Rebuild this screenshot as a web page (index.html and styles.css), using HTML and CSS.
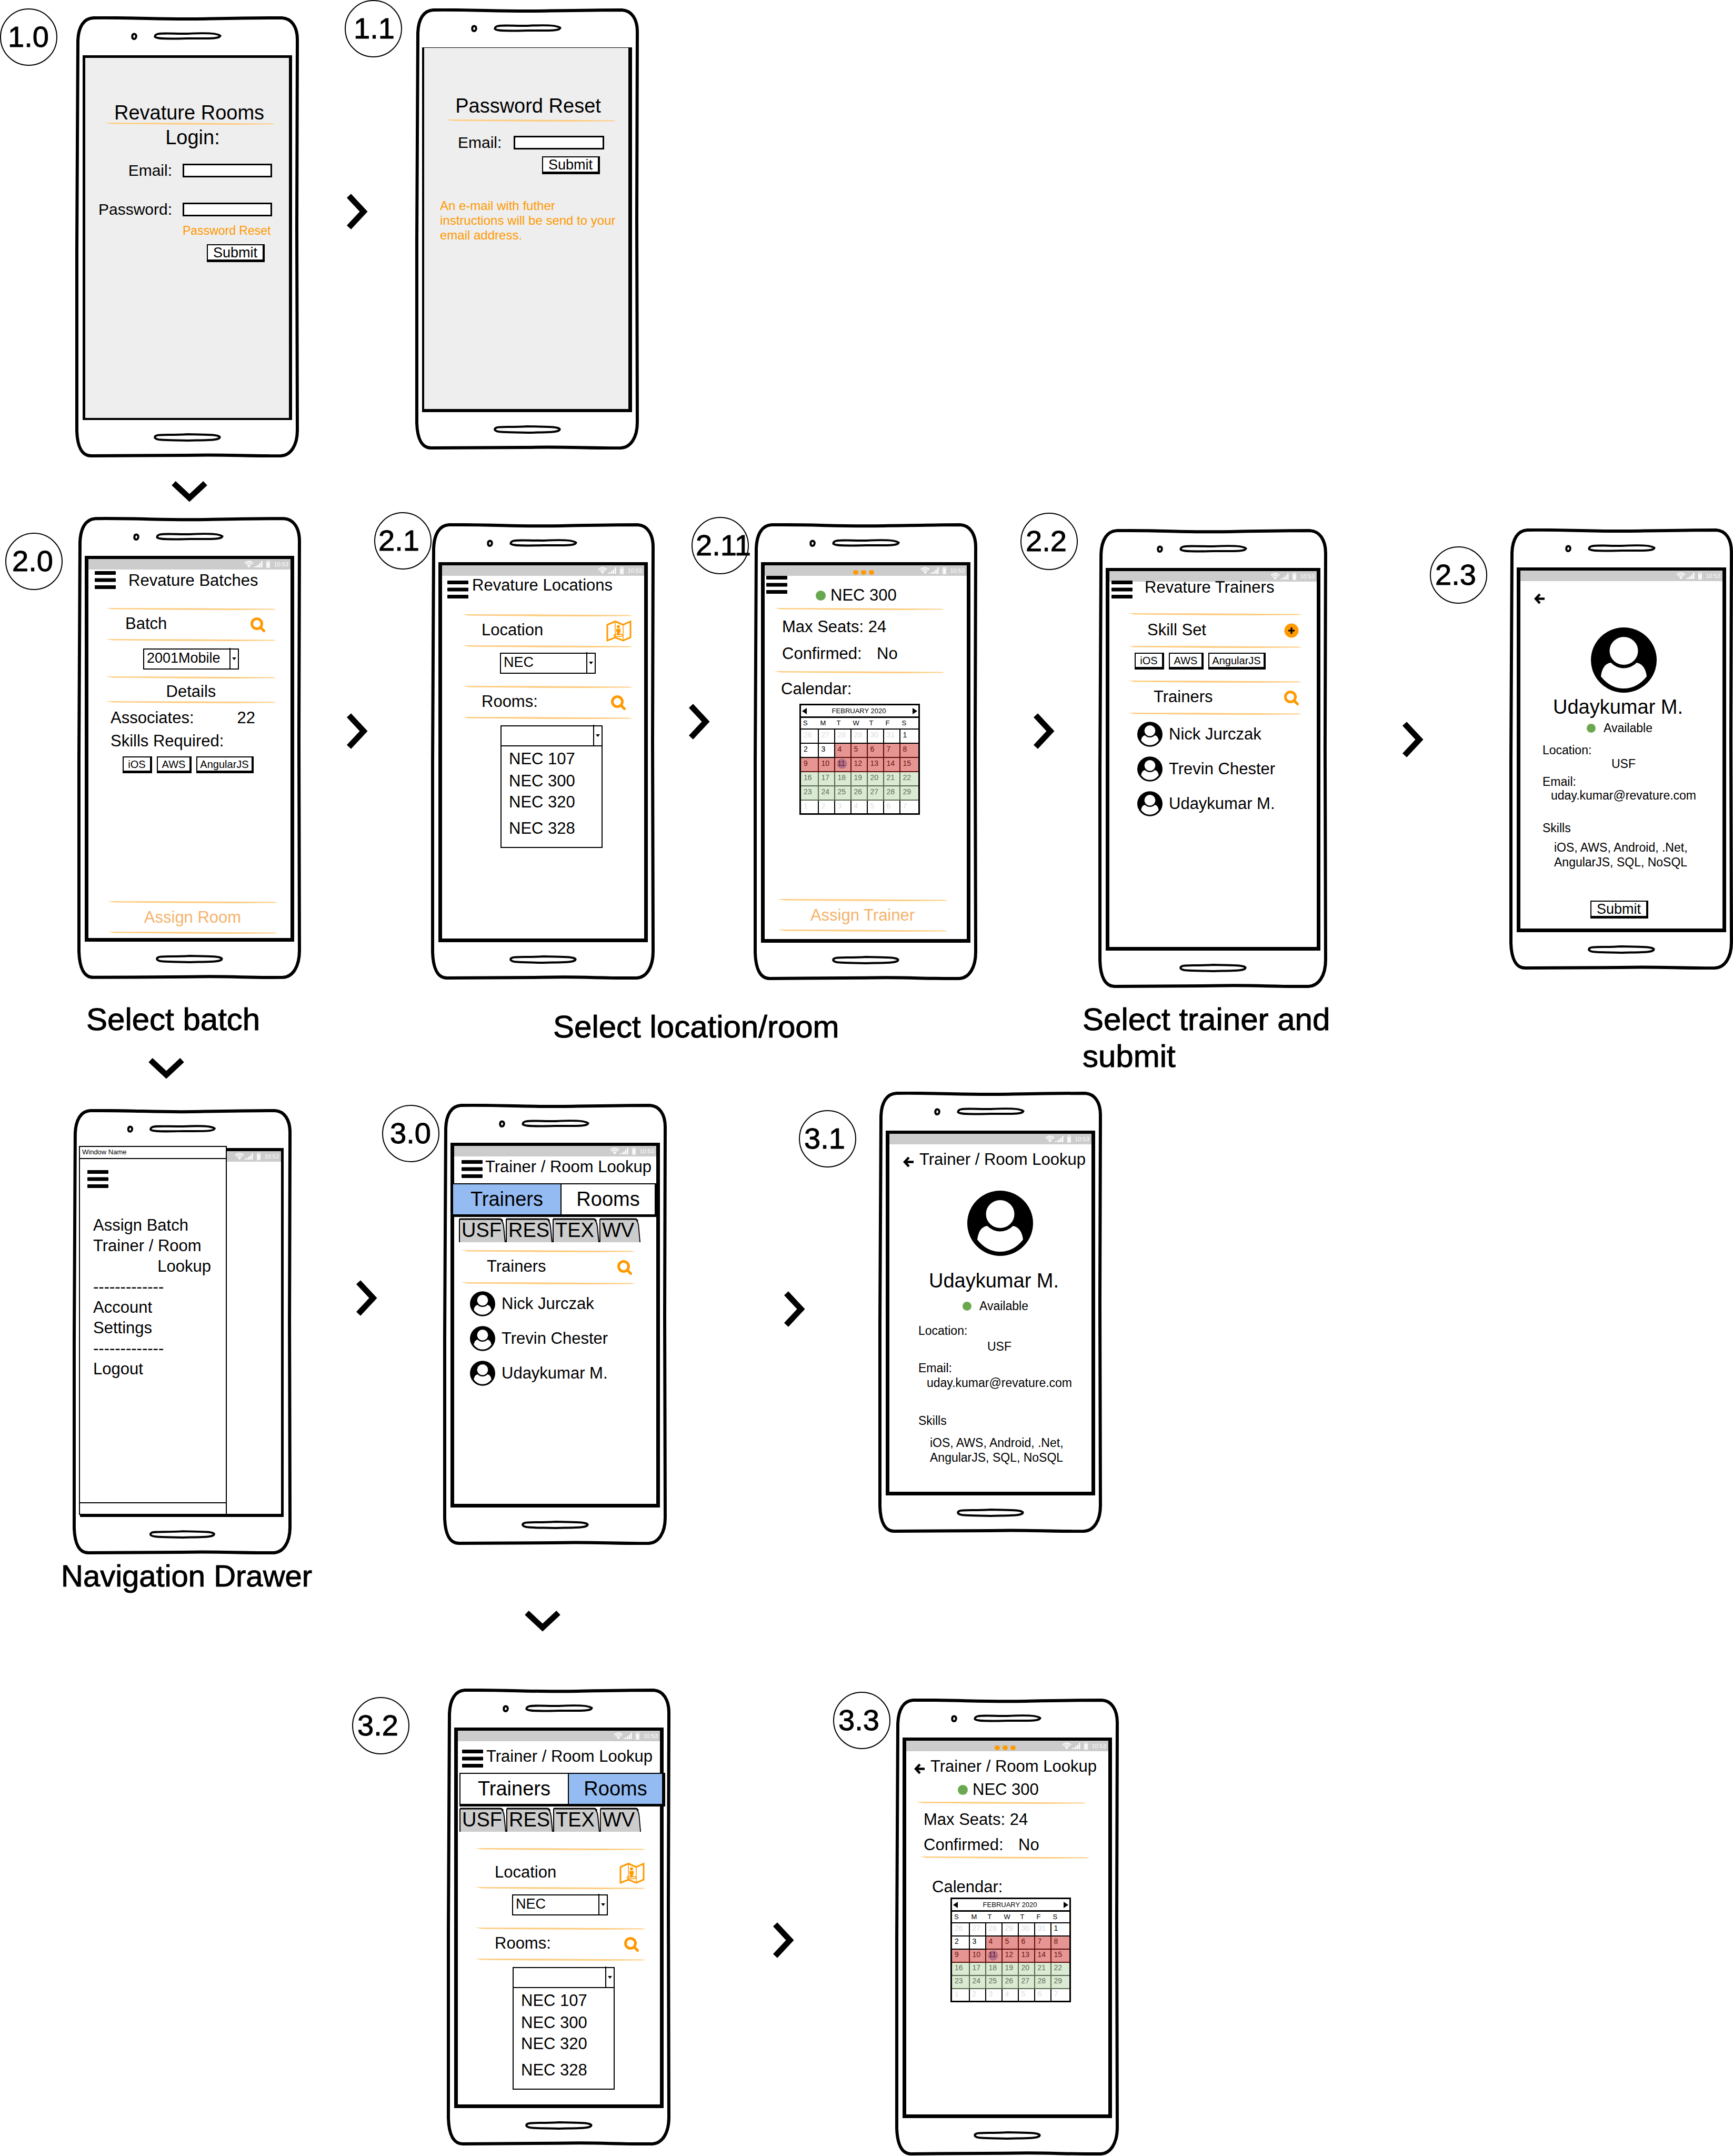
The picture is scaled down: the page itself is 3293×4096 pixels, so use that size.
FILE: index.html
```html
<!DOCTYPE html>
<html lang="en">
<head>
<meta charset="utf-8">
<title>Revature Rooms – mobile flow</title>
<link rel="stylesheet" href="styles.css">
</head>
<body>
<svg class="defs" aria-hidden="true">
  <symbol id="outline" viewBox="0 0 424 838" preserveAspectRatio="none">
    <path vector-effect="non-scaling-stroke" d="M34 3 C110 2 160 6 230 5 C290 4 340 3 392 3 C410 4 421 20 421 44 L420 400 L421 786 C421 816 408 834 390 835 C320 836 290 832 210 834 L30 835 C13 835 4 818 3 788 L3 440 L5 46 C6 20 16 4 34 3Z"/>
  </symbol>
  <symbol id="top" viewBox="0 0 424 74">
    <path d="M111 33.500 C107 34 106.500 43 111 43 C116.500 43 117 33 111 33.500Z M153 35 C156 31 180 33 213 33 C250 31 270 32 275 37 C273 43 255 42 213 42 C175 43 154 43 151 39 Q151 36 153 35Z"/>
  </symbol>
  <symbol id="home" viewBox="0 0 424 71">
    <path d="M153 30 C156 27 180 29 213 27 C250 28 270 27 274 32 C275 39 250 38 213 39 C175 38 154 39 151 34 Q150 31 153 30Z"/>
  </symbol>
  <symbol id="status" viewBox="0 0 52 16">
    <path fill="none" stroke="#fff" stroke-width="1.800" d="M1 6 Q9 -1 17 6 M3.500 8.500 Q9 3.500 14.500 8.500 M6 11 Q9 8.500 12 11"/>
    <circle cx="9" cy="12.500" r="1.500" fill="#fff"/>
    <path fill="#fff" d="M19 12h2v2h-2z M22 11h2v3h-2z M25 9h2.500v5H25z M28.500 6h2.500v8h-2.500z M32 2h2.500v12H32z"/>
    <path fill="none" stroke="#fff" stroke-width="1" d="M42.500 2.500h1.500v-1h3v1h1.500v12h-6z"/>
    <path fill="#fff" d="M43.500 4h4v9.500h-4z"/>
  </symbol>
  <symbol id="menu" viewBox="0 0 40 34">
    <path d="M1 0h38q1 0 1 1v5q0 1-1 1H1q-1 0-1-1V1q0-1 1-1z M1 13.500h38q1 0 1 1v5q0 1-1 1H1q-1 0-1-1v-5q0-1 1-1z M1 27h38q1 0 1 1v5q0 1-1 1H1q-1 0-1-1v-5q0-1 1-1z"/>
  </symbol>
  <symbol id="search" viewBox="0 0 30 30">
    <g fill="none" stroke="#f90" stroke-width="5"><circle cx="13" cy="13" r="9.500"/><path stroke-linecap="round" d="M20 20 L26.500 26.500"/></g>
  </symbol>
  <symbol id="map" viewBox="0 0 48 41">
    <path fill="none" stroke="#f90" stroke-width="3" d="M2 9 L17 2.500 L32 9 L46 2.500 V33 L32 39 L17 33 L2 39Z"/>
    <path fill="none" stroke="#f90" stroke-width="1.500" d="M17 3V33 M32 9V38"/>
    <ellipse cx="23" cy="29" rx="8.500" ry="2.500" fill="none" stroke="#f90" stroke-width="1.500"/>
    <circle cx="23" cy="12.500" r="3" fill="#f90"/>
    <path fill="#f90" d="M19 16.500h8v6.500h-1.500v6h-5v-6H19z"/>
  </symbol>
  <symbol id="add" viewBox="0 0 28 28">
    <circle cx="14" cy="14" r="13.500" fill="#f90"/><path stroke="#000" stroke-width="3" d="M14 8V20 M8 14H20"/>
  </symbol>
  <symbol id="back" viewBox="0 0 20 21">
    <path fill="none" stroke="#000" stroke-width="4.500" d="M11 2 L3 10.500 L11 19 M3 10.500 H20"/>
  </symbol>
  <symbol id="avatar" viewBox="0 0 125 124">
    <ellipse cx="62.500" cy="62" rx="62.500" ry="62"/>
    <ellipse cx="62.500" cy="44.500" rx="27" ry="26.500" fill="#fff"/>
    <path fill="#fff" d="M19 93 Q22 69 38 67 Q48 77 62 77.500 Q77 77 87 67 Q103 70 106 93 Q88 116 62 116 Q37 116 19 93Z"/>
  </symbol>
  <symbol id="tab" viewBox="0 0 88 46" preserveAspectRatio="none">
    <path fill="#ccc" d="M1 46 V2 H78 Q82 2 83 14 L87 46Z"/>
    <path fill="none" stroke="#000" stroke-width="2" d="M1 46 V2 M80 5 Q83 8 84 16 L87 46"/>
    <path fill="none" stroke="#000" stroke-width="3" d="M1 2 H77 Q80 2 82 6"/>
  </symbol>
  <symbol id="next" viewBox="0 0 41 70"><path fill="none" stroke="#000" stroke-width="11" d="M5 5 L33 35 L5 65"/></symbol>
  <symbol id="down" viewBox="0 0 70 41"><path fill="none" stroke="#000" stroke-width="11" d="M5 5 L35 33 L65 5"/></symbol>
</svg>

<main class="board">

  <span class="badge b10">1.0</span>
  <section class="phone p10">
    <svg class="outline"><use href="#outline"/></svg>
    <svg class="bezel-top"><use href="#top"/></svg>
    <form class="screen login">
      <h1 class="hero">Revature Rooms</h1>
      <hr>
      <h2 class="hero">Login:</h2>
      <div class="field"><label for="login-email">Email:</label><input id="login-email" type="email"></div>
      <div class="field password"><label for="login-pass">Password:</label><input id="login-pass" type="password"></div>
      <a class="reset" href="#reset">Password Reset</a>
      <button class="btn submit" type="button">Submit</button>
    </form>
    <svg class="bezel-home"><use href="#home"/></svg>
  </section>

  <svg class="next n1"><use href="#next"/></svg>

  <span class="badge b11">1.1</span>
  <section class="phone p11" id="reset">
    <svg class="outline"><use href="#outline"/></svg>
    <svg class="bezel-top"><use href="#top"/></svg>
    <form class="screen reset-screen">
      <h1 class="hero">Password Reset</h1>
      <hr>
      <div class="field"><label for="reset-email">Email:</label><input id="reset-email" type="email"></div>
      <button class="btn submit" type="button">Submit</button>
      <p class="note">An e-mail with futher<br>instructions will be send to your<br>email address.</p>
    </form>
    <svg class="bezel-home"><use href="#home"/></svg>
  </section>

  <svg class="down d1"><use href="#down"/></svg>

  <span class="badge b20">2.0</span>
  <section class="phone p20">
    <svg class="outline"><use href="#outline"/></svg>
    <svg class="bezel-top"><use href="#top"/></svg>
    <div class="screen batches">
      <div class="status"><svg><use href="#status"/></svg><time>10:53</time></div>
      <header class="appbar"><svg class="menu"><use href="#menu"/></svg><h2>Revature Batches</h2></header>
      <hr>
      <div class="bar"><label for="batch">Batch</label><svg class="search"><use href="#search"/></svg></div>
      <hr>
      <div class="select"><select id="batch"><option>2001Mobile</option></select></div>
      <hr>
      <h3 class="details">Details</h3>
      <hr>
      <div class="facts">
        <p><span>Associates:</span><span>22</span></p>
        <p>Skills Required:</p>
      </div>
      <div class="chips"><button class="btn ios">iOS</button><button class="btn aws">AWS</button><button class="btn ang">AngularJS</button></div>
      <div class="assign"><hr><a href="#locations">Assign Room</a><hr></div>
    </div>
    <svg class="bezel-home"><use href="#home"/></svg>
  </section>
  <p class="caption c1">Select batch</p>

  <svg class="next n2"><use href="#next"/></svg>

  <span class="badge b21">2.1</span>
  <section class="phone p21" id="locations">
    <svg class="outline"><use href="#outline"/></svg>
    <svg class="bezel-top"><use href="#top"/></svg>
    <div class="screen locations">
      <div class="status"><svg><use href="#status"/></svg><time>10:53</time></div>
      <header class="appbar"><svg class="menu"><use href="#menu"/></svg><h2>Revature Locations</h2></header>
      <hr>
      <div class="bar location"><label for="loc-a">Location</label><svg class="map"><use href="#map"/></svg></div>
      <hr>
      <div class="select"><select id="loc-a"><option>NEC</option></select></div>
      <hr class="second">
      <div class="bar"><label for="room-a">Rooms:</label><svg class="search"><use href="#search"/></svg></div>
      <hr>
      <div class="combo">
        <div class="select"><select id="room-a"><option></option></select></div>
        <ul><li>NEC 107</li><li>NEC 300</li><li>NEC 320</li><li>NEC 328</li></ul>
      </div>
    </div>
    <svg class="bezel-home"><use href="#home"/></svg>
  </section>
  <p class="caption c2">Select location/room</p>

  <svg class="next n3"><use href="#next"/></svg>

  <span class="badge b211">2.11</span>
  <section class="phone p211">
    <svg class="outline"><use href="#outline"/></svg>
    <svg class="bezel-top"><use href="#top"/></svg>
    <div class="screen room">
      <div class="status"><span class="dots"><i></i><i></i><i></i></span><svg><use href="#status"/></svg><time>10:53</time></div>
      <header class="roombar"><svg class="menu"><use href="#menu"/></svg><h2 class="room-name"><i class="dot"></i>NEC 300</h2></header>
      <hr>
      <div class="room-facts">
        <p>Max Seats: 24</p>
        <p><span>Confirmed:</span><span>No</span></p>
      </div>
      <hr>
      <h3 class="cal-label">Calendar:</h3>
      <table class="calendar">
        <colgroup><col class="first"><col><col><col><col><col><col class="last"></colgroup>
        <thead>
          <tr class="month"><th><i class="prev"></i></th><th colspan="5">FEBRUARY 2020</th><th><i class="following"></i></th></tr>
          <tr class="week"><th>S</th><th>M</th><th>T</th><th>W</th><th>T</th><th>F</th><th>S</th></tr>
        </thead>
        <tbody>
          <tr><td class="off">26</td><td class="off">27</td><td class="off">28</td><td class="off">29</td><td class="off">30</td><td class="off">31</td><td>1</td></tr>
          <tr><td>2</td><td>3</td><td class="busy">4</td><td class="busy">5</td><td class="busy">6</td><td class="busy">7</td><td class="busy">8</td></tr>
          <tr><td class="busy">9</td><td class="busy">10</td><td class="busy today">11</td><td class="busy">12</td><td class="busy">13</td><td class="busy">14</td><td class="busy">15</td></tr>
          <tr><td class="free">16</td><td class="free">17</td><td class="free">18</td><td class="free">19</td><td class="free">20</td><td class="free">21</td><td class="free">22</td></tr>
          <tr><td class="free">23</td><td class="free">24</td><td class="free">25</td><td class="free">26</td><td class="free">27</td><td class="free">28</td><td class="free">29</td></tr>
          <tr><td class="off">1</td><td class="off">2</td><td class="off">3</td><td class="off">4</td><td class="off">5</td><td class="off">6</td><td class="off">7</td></tr>
        </tbody>
      </table>
      <div class="assign"><hr><a href="#trainers">Assign Trainer</a><hr></div>
    </div>
    <svg class="bezel-home"><use href="#home"/></svg>
  </section>

  <svg class="next n4"><use href="#next"/></svg>

  <span class="badge b22">2.2</span>
  <section class="phone p22" id="trainers">
    <svg class="outline"><use href="#outline"/></svg>
    <svg class="bezel-top"><use href="#top"/></svg>
    <div class="screen trainers">
      <div class="status"><svg><use href="#status"/></svg><time>10:53</time></div>
      <header class="appbar"><svg class="menu"><use href="#menu"/></svg><h2>Revature Trainers</h2></header>
      <hr>
      <div class="bar skillset"><h3>Skill Set</h3><svg class="add"><use href="#add"/></svg></div>
      <hr>
      <div class="chips"><button class="btn ios">iOS</button><button class="btn aws">AWS</button><button class="btn ang">AngularJS</button></div>
      <hr>
      <div class="bar people-bar"><h3>Trainers</h3><svg class="search"><use href="#search"/></svg></div>
      <hr>
      <ul class="people">
        <li><svg><use href="#avatar"/></svg>Nick Jurczak</li>
        <li><svg><use href="#avatar"/></svg>Trevin Chester</li>
        <li><svg><use href="#avatar"/></svg>Udaykumar M.</li>
      </ul>
    </div>
    <svg class="bezel-home"><use href="#home"/></svg>
  </section>
  <p class="caption c3">Select trainer and<br>submit</p>

  <svg class="next n5"><use href="#next"/></svg>

  <span class="badge b23">2.3</span>
  <section class="phone p23">
    <svg class="outline"><use href="#outline"/></svg>
    <svg class="bezel-top"><use href="#top"/></svg>
    <div class="screen profile">
      <div class="status"><svg><use href="#status"/></svg><time>10:53</time></div>
      <header class="appbar"><svg class="back"><use href="#back"/></svg></header>
      <svg class="portrait"><use href="#avatar"/></svg>
      <h1 class="name">Udaykumar M.</h1>
      <p class="availability"><i class="dot"></i>Available</p>
      <dl>
        <dt>Location:</dt><dd class="site">USF</dd>
        <dt class="mail-label">Email:</dt><dd class="mail">uday.kumar@revature.com</dd>
        <dt class="skills-label">Skills</dt><dd class="skills">iOS, AWS, Android, .Net,<br>AngularJS, SQL, NoSQL</dd>
      </dl>
      <button class="btn submit">Submit</button>
    </div>
    <svg class="bezel-home"><use href="#home"/></svg>
  </section>

  <svg class="down d2"><use href="#down"/></svg>

  <section class="phone pnav">
    <svg class="outline"><use href="#outline"/></svg>
    <svg class="bezel-top"><use href="#top"/></svg>
    <div class="screen">
      <div class="status"><svg><use href="#status"/></svg><time>10:53</time></div>
    </div>
    <svg class="bezel-home"><use href="#home"/></svg>
    <nav class="drawer">
      <p class="window-name">Window Name</p>
      <svg class="menu"><use href="#menu"/></svg>
      <ul>
        <li><a href="#locations">Assign Batch</a></li>
        <li><a href="#lookup">Trainer / Room<span>Lookup</span></a></li>
        <li>-------------</li>
        <li><a href="#account">Account</a></li>
        <li><a href="#settings">Settings</a></li>
        <li>-------------</li>
        <li><a href="#logout">Logout</a></li>
      </ul>
    </nav>
  </section>
  <p class="caption c4">Navigation Drawer</p>

  <svg class="next n6"><use href="#next"/></svg>

  <span class="badge b30">3.0</span>
  <section class="phone p30" id="lookup">
    <svg class="outline"><use href="#outline"/></svg>
    <svg class="bezel-top"><use href="#top"/></svg>
    <div class="screen lookup-trainers">
      <div class="status"><svg><use href="#status"/></svg><time>10:53</time></div>
      <header class="appbar"><svg class="menu"><use href="#menu"/></svg><h2>Trainer / Room Lookup</h2></header>
      <div class="segments"><button class="on">Trainers</button><button>Rooms</button></div>
      <nav class="tabs"><a href="#usf"><svg><use href="#tab"/></svg><span>USF</span></a><a href="#res"><svg><use href="#tab"/></svg><span>RES</span></a><a href="#tex"><svg><use href="#tab"/></svg><span>TEX</span></a><a href="#wv"><svg><use href="#tab"/></svg><span>WV</span></a></nav>
      <hr>
      <div class="bar people-bar"><h3>Trainers</h3><svg class="search"><use href="#search"/></svg></div>
      <hr>
      <ul class="people">
        <li><svg><use href="#avatar"/></svg>Nick Jurczak</li>
        <li><svg><use href="#avatar"/></svg>Trevin Chester</li>
        <li><svg><use href="#avatar"/></svg>Udaykumar M.</li>
      </ul>
    </div>
    <svg class="bezel-home"><use href="#home"/></svg>
  </section>

  <svg class="next n7"><use href="#next"/></svg>

  <span class="badge b31">3.1</span>
  <section class="phone p31">
    <svg class="outline"><use href="#outline"/></svg>
    <svg class="bezel-top"><use href="#top"/></svg>
    <div class="screen profile lookup-profile">
      <div class="status"><svg><use href="#status"/></svg><time>10:53</time></div>
      <header class="appbar"><svg class="back"><use href="#back"/></svg><h2>Trainer / Room Lookup</h2></header>
      <svg class="portrait"><use href="#avatar"/></svg>
      <h1 class="name">Udaykumar M.</h1>
      <p class="availability"><i class="dot"></i>Available</p>
      <dl>
        <dt>Location:</dt><dd class="site">USF</dd>
        <dt class="mail-label">Email:</dt><dd class="mail">uday.kumar@revature.com</dd>
        <dt class="skills-label">Skills</dt><dd class="skills">iOS, AWS, Android, .Net,<br>AngularJS, SQL, NoSQL</dd>
      </dl>
    </div>
    <svg class="bezel-home"><use href="#home"/></svg>
  </section>

  <svg class="down d3"><use href="#down"/></svg>

  <span class="badge b32">3.2</span>
  <section class="phone p32">
    <svg class="outline"><use href="#outline"/></svg>
    <svg class="bezel-top"><use href="#top"/></svg>
    <div class="screen locations lookup-rooms">
      <div class="status"><svg><use href="#status"/></svg><time>10:53</time></div>
      <header class="appbar"><svg class="menu"><use href="#menu"/></svg><h2>Trainer / Room Lookup</h2></header>
      <div class="segments"><button>Trainers</button><button class="on">Rooms</button></div>
      <nav class="tabs"><a href="#usf"><svg><use href="#tab"/></svg><span>USF</span></a><a href="#res"><svg><use href="#tab"/></svg><span>RES</span></a><a href="#tex"><svg><use href="#tab"/></svg><span>TEX</span></a><a href="#wv"><svg><use href="#tab"/></svg><span>WV</span></a></nav>
      <hr>
      <div class="bar location"><label for="loc-b">Location</label><svg class="map"><use href="#map"/></svg></div>
      <hr>
      <div class="select"><select id="loc-b"><option>NEC</option></select></div>
      <hr class="second">
      <div class="bar"><label for="room-b">Rooms:</label><svg class="search"><use href="#search"/></svg></div>
      <hr>
      <div class="combo">
        <div class="select"><select id="room-b"><option></option></select></div>
        <ul><li>NEC 107</li><li>NEC 300</li><li>NEC 320</li><li>NEC 328</li></ul>
      </div>
    </div>
    <svg class="bezel-home"><use href="#home"/></svg>
  </section>

  <svg class="next n8"><use href="#next"/></svg>

  <span class="badge b33">3.3</span>
  <section class="phone p33">
    <svg class="outline"><use href="#outline"/></svg>
    <svg class="bezel-top"><use href="#top"/></svg>
    <div class="screen room lookup-room">
      <div class="status"><span class="dots"><i></i><i></i><i></i></span><svg><use href="#status"/></svg><time>10:53</time></div>
      <header class="appbar"><svg class="back"><use href="#back"/></svg><h2>Trainer / Room Lookup</h2></header>
      <h2 class="room-name"><i class="dot"></i>NEC 300</h2>
      <hr>
      <div class="room-facts">
        <p>Max Seats: 24</p>
        <p><span>Confirmed:</span><span>No</span></p>
      </div>
      <hr class="second">
      <h3 class="cal-label">Calendar:</h3>
      <table class="calendar">
        <colgroup><col class="first"><col><col><col><col><col><col class="last"></colgroup>
        <thead>
          <tr class="month"><th><i class="prev"></i></th><th colspan="5">FEBRUARY 2020</th><th><i class="following"></i></th></tr>
          <tr class="week"><th>S</th><th>M</th><th>T</th><th>W</th><th>T</th><th>F</th><th>S</th></tr>
        </thead>
        <tbody>
          <tr><td class="off">26</td><td class="off">27</td><td class="off">28</td><td class="off">29</td><td class="off">30</td><td class="off">31</td><td>1</td></tr>
          <tr><td>2</td><td>3</td><td class="busy">4</td><td class="busy">5</td><td class="busy">6</td><td class="busy">7</td><td class="busy">8</td></tr>
          <tr><td class="busy">9</td><td class="busy">10</td><td class="busy today">11</td><td class="busy">12</td><td class="busy">13</td><td class="busy">14</td><td class="busy">15</td></tr>
          <tr><td class="free">16</td><td class="free">17</td><td class="free">18</td><td class="free">19</td><td class="free">20</td><td class="free">21</td><td class="free">22</td></tr>
          <tr><td class="free">23</td><td class="free">24</td><td class="free">25</td><td class="free">26</td><td class="free">27</td><td class="free">28</td><td class="free">29</td></tr>
          <tr><td class="off">1</td><td class="off">2</td><td class="off">3</td><td class="off">4</td><td class="off">5</td><td class="off">6</td><td class="off">7</td></tr>
        </tbody>
      </table>
    </div>
    <svg class="bezel-home"><use href="#home"/></svg>
  </section>

</main>
</body>
</html>
```
FILE: styles.css
```css
*, *::before, *::after { box-sizing: border-box; }

body {
  margin: 0;
  background: #fff;
  color: #000;
  font: 31px/36px "Liberation Sans", Arial, sans-serif;
}

h1, h2, h3, p, ul, dl, dd { margin: 0; padding: 0; font-size: 31px; font-weight: 400; }
ul { list-style: none; }
a { color: inherit; text-decoration: none; }
svg { display: block; flex: none; }
i { display: block; flex: none; }
button, input, select { font-family: inherit; color: inherit; margin: 0; }
.defs { position: absolute; width: 0; height: 0; }

/* Canvas: every phone, badge, chevron and caption is pinned to its spot */
.board { position: relative; min-height: 100vh; overflow: hidden; }
.phone, .badge, .next, .down, .caption { position: absolute; }

.badge {
  width: 109px;
  height: 109px;
  padding-left: 11px;
  border: 2px solid #000;
  border-radius: 50%;
  font-size: 56px;
  line-height: 104px;
  white-space: nowrap;
  -webkit-text-stroke: 1px #000;
}
.b10 { left: 0; top: 16px; padding-left: 13px; }
.b11 { left: 655px; top: 0; padding-left: 15px; }
.b20 { left: 10px; top: 1012px; }
.b21 { left: 711px; top: 973px; padding-left: 6px; }
.b211 { left: 1314px; top: 982px; padding-left: 6px; }
.b22 { left: 1939px; top: 974px; padding-left: 8px; }
.b23 { left: 2717px; top: 1038px; padding-left: 8px; }
.b30 { left: 726px; top: 2099px; padding-left: 13px; }
.b31 { left: 1518px; top: 2109px; padding-left: 8px; }
.b32 { left: 669px; top: 3224px; padding-left: 8px; }
.b33 { left: 1583px; top: 3214px; padding-left: 8px; }

.next { width: 41px; height: 70px; }
.down { width: 70px; height: 41px; }
.n1 { left: 658px; top: 367px; }
.n2 { left: 658px; top: 1354px; }
.n3 { left: 1308px; top: 1336px; }
.n4 { left: 1963px; top: 1354px; }
.n5 { left: 2664px; top: 1370px; }
.n6 { left: 676px; top: 2431px; }
.n7 { left: 1489px; top: 2452px; }
.n8 { left: 1468px; top: 3651px; }
.d1 { left: 325px; top: 913px; }
.d2 { left: 281px; top: 2009px; }
.d3 { left: 996px; top: 3059px; }

.caption { font-size: 60px; line-height: 70px; white-space: nowrap; -webkit-text-stroke: 1px #000; }
.c1 { left: 164px; top: 1902px; }
.c2 { left: 1051px; top: 1916px; }
.c3 { left: 2057px; top: 1902px; }
.c4 { left: 116px; top: 2959px; font-size: 58px; }

/* Phone shell */
.phone { display: flex; flex-direction: column; width: 425px; height: 838px; }
.p10 { left: 143px; top: 31px; }
.p11 { left: 789px; top: 16px; }
.p20 { left: 147px; top: 982px; height: 878px; }
.p21 { left: 819px; top: 994px; height: 867px; }
.p211 { left: 1432px; top: 994px; height: 868px; }
.p22 { left: 2087px; top: 1005px; width: 435px; height: 872px; }
.p23 { left: 2868px; top: 1004px; }
.pnav { left: 138px; top: 2107px; width: 416px; height: 846px; }
.p30 { left: 842px; top: 2097px; }
.p31 { left: 1669px; top: 2074px; }
.p32 { left: 849px; top: 3208px; height: 868px; }
.p33 { left: 1701px; top: 3227px; height: 868px; }

.outline { position: absolute; inset: 0; width: 100%; height: 100%; fill: none; stroke: #000; stroke-width: 6px; overflow: visible; }
.bezel-top { width: 100%; height: 74px; fill: none; stroke: #000; stroke-width: 4px; }
.bezel-home { width: 100%; height: 71px; fill: none; stroke: #000; stroke-width: 4px; }

.screen {
  position: relative;
  flex: 1;
  display: flex;
  flex-direction: column;
  align-items: flex-start;
  margin: 0 13px 0 14px;
  border: solid #000;
  border-width: 6px 7px 7px;
}

.status {
  position: relative;
  align-self: stretch;
  display: flex;
  justify-content: flex-end;
  align-items: center;
  gap: 4px;
  height: 20px;
  padding-right: 4px;
  background: #ccc;
  color: #fff;
  font-size: 11px;
  line-height: 20px;
}
.status svg { width: 52px; height: 16px; }
.dots { position: absolute; left: 168px; top: 9px; display: flex; gap: 5px; }
.dots i { width: 10px; height: 9px; border-radius: 50%; background: #f90; }

.appbar { display: flex; align-items: center; white-space: nowrap; height: 38px; }
.appbar h2 { padding-bottom: 8px; }
.menu { width: 40px; height: 34px; }
.back { width: 20px; height: 21px; }
.search { width: 30px; height: 30px; }
.map { width: 48px; height: 41px; }
.add { width: 28px; height: 28px; }
.dot { width: 19px; height: 19px; border-radius: 50%; background: #6aa84f; }

hr {
  flex: none;
  width: 324px;
  height: 4px;
  margin: 0 0 0 33px;
  border: 0;
  background: #ffcc80;
  clip-path: polygon(0 0, 50% 10%, 98% 40%, 100% 80%, 75% 100%, 40% 90%, 4% 60%);
}

.bar { display: flex; align-items: center; justify-content: space-between; width: 324px; height: 55px; padding: 0 12px 0 37px; }
.bar label, .bar h3 { padding-bottom: 3px; }

.btn {
  background: #fff;
  border: solid #000;
  border-width: 2px 4px 5px 2px;
  padding: 0;
  white-space: nowrap;
}
.submit { width: 110px; height: 34px; font-size: 27px; line-height: 26px; }
.chips { display: flex; gap: 9px; }
.chips .btn { height: 32px; font-size: 20px; line-height: 24px; }
.ios { width: 56px; }
.aws { width: 66px; }
.ang { width: 109px; }

.select { position: relative; width: 182px; height: 40px; }
.select select {
  appearance: none;
  width: 100%;
  height: 100%;
  padding: 0 0 3px 5px;
  border: 2px solid #000;
  border-radius: 0;
  background: #fff;
  font-size: 27px;
}
.select::before { content: ""; position: absolute; right: 16px; top: 0; width: 2px; height: 100%; background: #000; }
.select::after { content: ""; position: absolute; right: 5px; top: 18px; border: 4px solid transparent; border-top: 5px solid #000; border-bottom: 0; }

.assign { width: 324px; margin: auto 0 8px; text-align: center; color: #f6b26b; }
.assign hr { margin: 0; }
.assign a { display: block; line-height: 54px; }

/* Sign-in screens */
.hero { font-size: 38px; line-height: 44px; white-space: nowrap; text-align: center; width: 100%; }
.field { display: flex; align-items: center; font-size: 30px; }
.field label { text-align: right; }
.field input { height: 26px; padding: 0 4px; border: 3px solid #000; background: #fff; }

.login { border-width: 5px 6px 4px 5px; background: #eee; padding-top: 83px; }
.login .hero { padding-left: 8px; line-height: 42px; }
.login hr { margin-left: 37px; margin-top: -2px; }
.login .hero + hr + .hero { padding: 3px 0 0 21px; }
.login .field { gap: 20px; margin-top: 19px; height: 46px; }
.login .field label { width: 165px; }
.login .field input { width: 170px; }
.login .password { margin-top: 28px; }
.reset { margin: 3px 0 0 185px; font-size: 23px; line-height: 28px; color: #f90; white-space: nowrap; }
.login .submit { margin: 12px 0 0 231px; }

.reset-screen { margin-left: 13px; border-width: 1px 7px 6px 4px; background: #eee; padding-top: 88px; }
.reset-screen .hero { padding-left: 7px; }
.reset-screen hr { margin: 4px 0 0 41px; }
.reset-screen .field { gap: 24px; margin: 23px 0 0 64px; height: 34px; }
.reset-screen .field label { width: 82px; }
.reset-screen .field input { width: 172px; }
.reset-screen .submit { margin: 9px 0 0 224px; }
.note { margin: 46px 0 0 30px; font-size: 24px; line-height: 28px; color: #f90; white-space: nowrap; }

/* 2.0 */
.batches .appbar { height: 40px; margin-left: 12px; gap: 24px; }
.batches .appbar h2 { padding: 2px 0 0; }
.batches .appbar + hr { margin-top: 33px; }
.batches .bar { margin-left: 33px; padding-right: 20px; }
.batches .select { margin: 13px 0 14px 104px; }
.details { width: 324px; margin-left: 33px; padding-top: 7px; line-height: 36px; text-align: center; }
.facts { width: 275px; margin: 6px 0 0 42px; }
.facts p { display: flex; justify-content: space-between; line-height: 44px; }
.batches .chips { margin: 7px 0 0 65px; }
.batches .assign { margin-left: 36px; }

/* 2.1 and 3.2 */
.locations .appbar { height: 36px; margin: 8px 0 0 10px; gap: 7px; }
.locations .appbar h2 { padding-bottom: 16px; }
.locations hr { margin-left: 38px; }
.locations .appbar + hr { margin-top: 29px; }
.locations .bar { margin-left: 38px; }
.locations .location { padding-right: 2px; }
.locations > .select { margin: 9px 0 0 110px; }
.locations .second { margin-top: 24px; }
.combo { width: 194px; margin: 11px 0 0 111px; }
.combo .select { width: 100%; }
.combo ul { padding: 4px 0 0 14px; border: 2px solid #000; border-top: 0; height: 194px; }
.combo li { line-height: 42px; }
.combo li:nth-child(3) { line-height: 38px; }
.combo li:nth-child(4) { line-height: 62px; }

/* 2.11 and 3.3 */
.roombar { display: flex; align-items: flex-start; gap: 54px; height: 61px; margin-left: 3px; }
.room-name { display: flex; align-items: center; gap: 9px; white-space: nowrap; }
.roombar .room-name { align-self: flex-end; padding-bottom: 4px; line-height: 40px; }
.room hr { margin-left: 18px; }
.room-facts { width: 300px; margin: 6px 0 8px 33px; }
.room-facts p { display: flex; line-height: 51px; white-space: nowrap; }
.room-facts p span:first-child { width: 180px; }
.cal-label { margin-left: 31px; padding-top: 2px; line-height: 56px; }
.room .assign { margin-left: 24px; margin-bottom: 14px; }
.room .assign hr { margin-left: 0; }

.calendar {
  table-layout: fixed;
  width: 226px;
  margin-left: 66px;
  border-collapse: collapse;
  border: 3px solid #000;
  font-size: 14px;
  line-height: 16px;
}
.calendar col { width: 31px; }
.calendar .first { width: 34px; }
.calendar .last { width: 37px; }
.calendar th { padding: 0; font-size: 13px; font-weight: 400; line-height: 14px; text-align: left; }
.calendar .month { height: 24px; border-bottom: 3px solid #000; }
.calendar .month th { text-align: center; }
.calendar .week { height: 22px; }
.calendar .week th { padding-left: 4px; }
.prev, .following { width: 0; height: 0; border: 6px solid transparent; }
.prev { margin-left: 2px; border-right: 9px solid #000; border-left: 0; }
.following { margin-left: 24px; border-left: 9px solid #000; border-right: 0; }
.calendar td { height: 27px; padding: 2px 0 0 5px; border: 2px solid #000; vertical-align: top; }
.calendar td.off { color: #ddd; }
.calendar td.busy { background: #e69592; color: #6b1412; border-color: #5f100e; }
.calendar td.free { background: #dbead3; color: #5f6e57; border-color: #5a6b52; }
.calendar td.today { background: radial-gradient(circle at 13px 11px, #b0708c 9px, #e69592 10px); }

.lookup-room .appbar { margin: 14px 0 0 15px; gap: 11px; }
.lookup-room .room-name { margin: 3px 0 0 98px; }
.lookup-room .room-name + hr { margin-top: 5px; }
.lookup-room .room-facts p { line-height: 48px; }
.lookup-room .room-facts { margin-bottom: 0; }
.lookup-room .second { margin-left: 25px; margin-top: -2px; }
.lookup-room .cal-label { margin: 32px 0 0 49px; line-height: 40px; }
.lookup-room .calendar { margin-left: 84px; }
.lookup-room .calendar td { height: 25px; padding-top: 1px; }

/* 2.2 and 3.0 */
.trainers hr, .lookup-trainers hr, .trainers .bar, .lookup-trainers .bar { width: 331px; }
.trainers hr, .trainers .bar { margin-left: 35px; }
.trainers .appbar { height: 34px; margin: -2px 0 28px 4px; gap: 23px; }
.trainers .status { z-index: 0; }
.trainers .appbar { z-index: 1; }
.trainers .skillset { height: 58px; padding-right: 6px; }
.trainers .chips { margin: 9px 0 21px 48px; }
.trainers .bar.people-bar, .lookup-trainers .bar.people-bar { height: 57px; padding: 0 5px 0 49px; }
.people { margin: 13px 0 0 53px; }
.people li { display: flex; align-items: center; gap: 12px; height: 48px; margin-bottom: 18px; white-space: nowrap; }
.people svg { width: 48px; height: 48px; }

.segments { display: flex; width: 391px; height: 64px; border: solid #000; border-width: 2px 6px 5px 2px; background: #fff; z-index: 1; }
.segments button { flex: 1; padding: 0; border: 0; background: none; font-size: 38px; line-height: 57px; }
.segments button:first-child { flex: none; width: 206px; border-right: 2px solid #000; }
.segments .on { background: #94bbf2; }
.tabs { display: flex; height: 46px; margin-top: 2px; }
.tabs a { position: relative; width: 89px; padding-left: 5px; font-size: 38px; line-height: 46px; }
.tabs a:last-child { width: 78px; }
.tabs svg { position: absolute; left: 0; top: 0; width: 100%; height: 100%; }
.tabs span { position: relative; }

.lookup-trainers .appbar { height: 36px; margin: 6px 0 0 14px; gap: 5px; }
.lookup-trainers .segments { margin: 9px 0 0 -4px; }
.lookup-trainers .tabs { margin-left: 9px; }
.lookup-trainers hr, .lookup-trainers .bar { margin-left: 13px; }
.lookup-trainers .tabs + hr { margin-top: 15px; }
.lookup-trainers .people { margin-left: 30px; }

.lookup-rooms .appbar { height: 38px; margin: 14px 0 0 8px; gap: 6px; }
.lookup-rooms .appbar h2 { padding-bottom: 8px; }
.lookup-rooms .segments { margin: 8px 0 0 3px; }
.lookup-rooms .tabs { margin-left: 3px; }
.lookup-rooms hr, .lookup-rooms .bar { margin-left: 33px; }
.lookup-rooms .tabs + hr { margin-top: 31px; }
.lookup-rooms .location { height: 70px; padding-top: 16px; }
.lookup-rooms > .select { margin-left: 103px; }
.lookup-rooms .combo { margin-left: 104px; }

/* 2.3 and 3.1 */
.profile .appbar { margin: 14px 0 0 26px; gap: 11px; }
.portrait { width: 125px; height: 124px; margin: 36px 0 0 134px; }
.name { margin: 5px 0 0 62px; font-size: 38px; line-height: 44px; white-space: nowrap; }
.availability { display: flex; align-items: center; gap: 15px; margin: 5px 0 0 126px; font-size: 23px; line-height: 26px; }
.availability .dot { width: 17px; height: 17px; }
.profile dl { margin: 16px 0 0 42px; font-size: 23px; line-height: 26px; white-space: nowrap; }
.profile dd { font-size: 23px; }
.site { padding-left: 131px; }
.mail-label { margin-top: 8px; }
.mail { padding-left: 16px; }
.skills-label { margin-top: 36px; }
.skills { margin-top: 10px; padding-left: 22px; line-height: 28px; }
.profile .submit { margin: 59px 0 0 133px; }

.lookup-profile .portrait { margin-left: 148px; }
.lookup-profile .name { margin: 25px 0 0 75px; }
.lookup-profile .availability { margin: 13px 0 0 139px; }
.lookup-profile dl { margin: 21px 0 0 55px; }
.lookup-profile .site { margin-top: 4px; }
.lookup-profile .mail-label { margin-top: 15px; }
.lookup-profile .mail { margin-top: 2px; }
.lookup-profile .skills-label { margin-top: 46px; }
.lookup-profile .skills { margin-top: 15px; }

/* Navigation drawer window, open over the screen */
.pnav .screen { margin-right: 15px; border-width: 6px 5px 6px 3px; }
.drawer {
  position: absolute;
  left: 12px;
  top: 70px;
  bottom: 75px;
  width: 281px;
  display: flex;
  flex-direction: column;
  border: 2px solid #000;
  background: #fff;
}
.drawer::after { content: ""; height: 22px; margin-top: auto; border-top: 2px solid #000; }
.window-name { height: 23px; padding-left: 4px; border-bottom: 2px solid #000; font-size: 13px; line-height: 20px; }
.drawer .menu { margin: 21px 0 0 14px; }
.drawer ul { margin: 51px 0 0; padding: 0 28px 0 25px; line-height: 39px; }
.drawer a, .drawer a span { display: block; }
.drawer a span { text-align: right; }
```
